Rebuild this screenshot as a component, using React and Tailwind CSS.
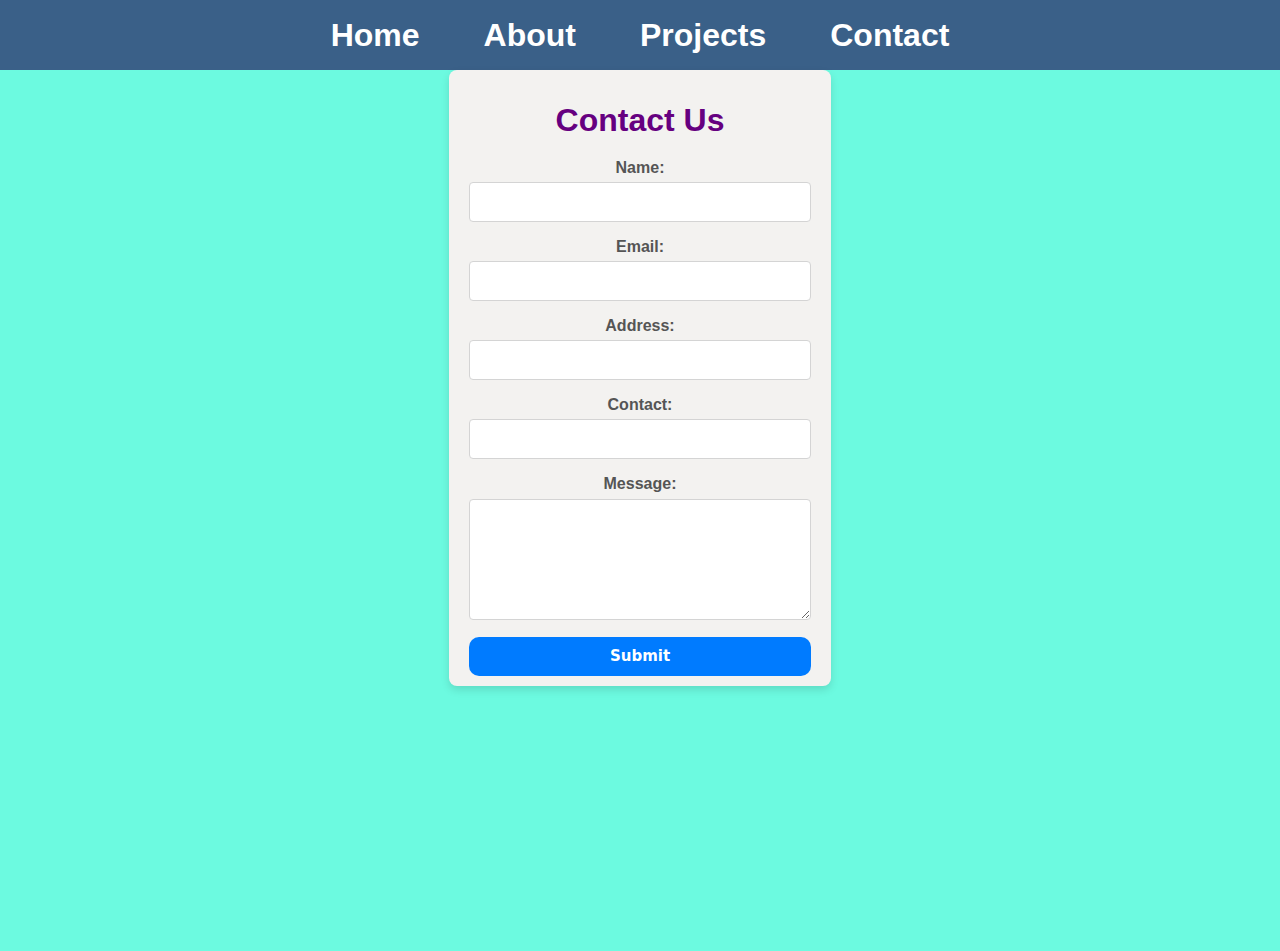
import React from 'react';

const fields = [
  { id: 'name', label: 'Name:' },
  { id: 'email', label: 'Email:' },
  { id: 'address', label: 'Address:' },
  { id: 'contact', label: 'Contact:' },
];

const App = () => {
  return (
    <div className="min-h-[951px] bg-[#6cfae0] font-['Liberation_Sans',Arial,sans-serif]">
      {/* Top nav */}
      <nav className="h-[70px] bg-[#3a6088] flex items-center justify-center gap-16">
        {['Home', 'About', 'Projects', 'Contact'].map(link => (
          <a key={link} href="#" className="text-white text-[32px] font-bold leading-[37px]">
            {link}
          </a>
        ))}
      </nav>

      {/* Contact card */}
      <div className="w-[382px] mx-auto bg-[#f3f2f0] rounded-lg shadow-[0_4px_8px_rgba(0,0,0,0.12)] px-5 pt-[32px] pb-[10px]">
        <h2 className="text-center text-[32px] leading-[37px] font-bold text-[#660080] mb-[20px]">Contact Us</h2>
        <form onSubmit={e => e.preventDefault()}>
          {fields.map(f => (
            <div key={f.id} className="mb-[16px]">
              <label htmlFor={f.id} className="block text-center text-base leading-[18px] font-bold text-[#555] mb-[5px]">
                {f.label}
              </label>
              <input id={f.id} type="text" className="block w-full h-[40px] bg-white border border-[#d4d4d4] rounded-[4px] px-2" />
            </div>
          ))}
          <label htmlFor="message" className="block text-center text-base leading-[18px] font-bold text-[#555] mb-[6px]">
            Message:
          </label>
          <textarea id="message" className="block w-full h-[121px] bg-white border border-[#d4d4d4] rounded-[4px] px-2 mb-[17px]"></textarea>
          <button type="submit" className="block w-full h-[39px] bg-[#007bff] text-white rounded-[10px] font-bold text-[15px] font-['DejaVu_Sans',Verdana,sans-serif]">
            Submit
          </button>
        </form>
      </div>
    </div>
  );
};

export default App;
